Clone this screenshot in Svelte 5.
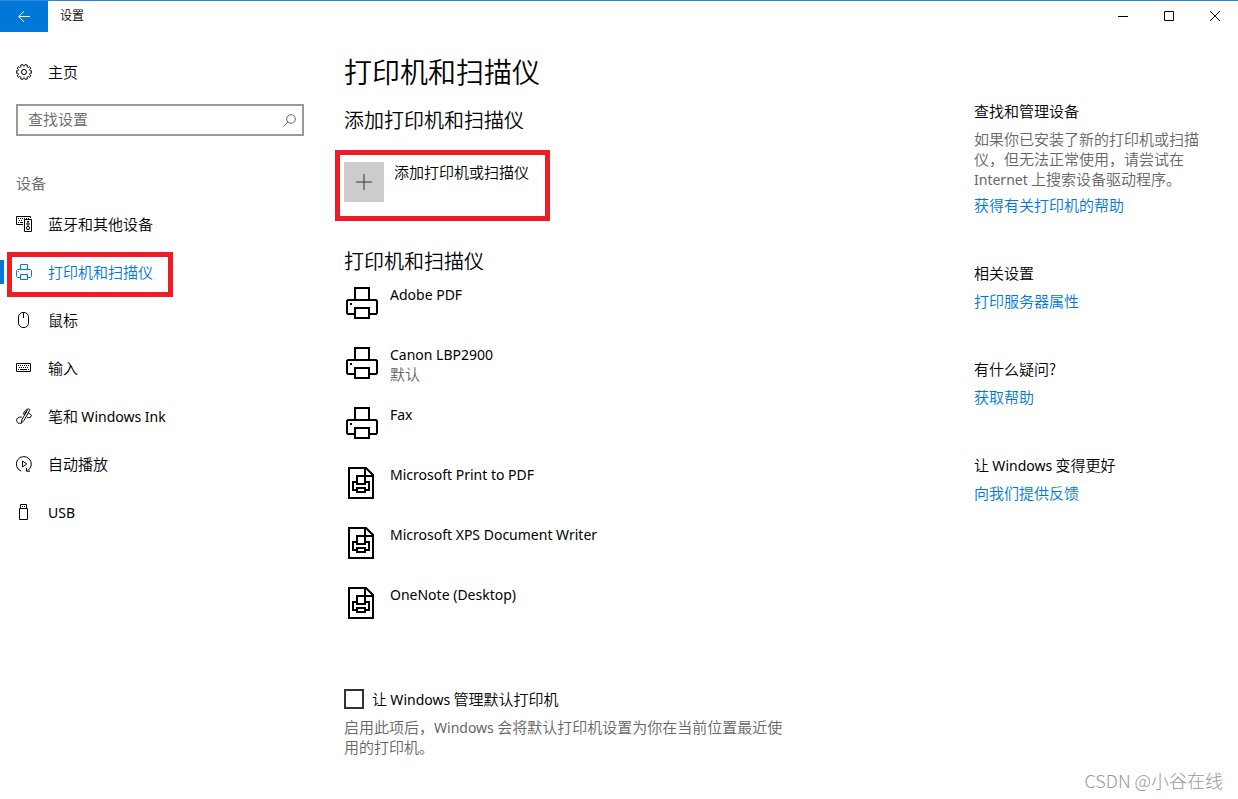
<script>
  const nav = [
    { icon: 'devices', label: '蓝牙和其他设备' },
    { icon: 'printer', label: '打印机和扫描仪', active: true },
    { icon: 'mouse', label: '鼠标' },
    { icon: 'keyboard', label: '输入' },
    { icon: 'pen', label: '笔和', latin: 'Windows Ink' },
    { icon: 'autoplay', label: '自动播放' },
    { icon: 'usb', latin: 'USB' }
  ];

  const printers = [
    { name: 'Adobe PDF' },
    { name: 'Canon LBP2900', status: '默认' },
    { name: 'Fax' },
    { name: 'Microsoft Print to PDF', file: true },
    { name: 'Microsoft XPS Document Writer', file: true },
    { name: 'OneNote (Desktop)', file: true }
  ];

  // Outline of a ten-toothed gear centred in a 16px box.
  const gear = Array.from({ length: 10 }, (_, i) => {
    const point = (r, deg) => {
      const a = ((i * 36 + deg) * Math.PI) / 180;
      return `${(8 + r * Math.cos(a)).toFixed(2)} ${(8 + r * Math.sin(a)).toFixed(2)}`;
    };
    return `${i ? 'L' : 'M'}${point(6.2, -11)}L${point(7.7, -8)}L${point(7.7, 8)}L${point(6.2, 11)}`;
  }).join('') + 'Z';

  let query = $state('');
  let managed = $state(false);
</script>

<div class="window">
  <header class="titlebar">
    <button class="back" aria-label="返回">
      <svg width="12" height="12" viewBox="0 0 12 12"><path d="M12 5.5H.8M6 .3L.7 5.5L6 10.8" /></svg>
    </button>
    <span class="caption">设置</span>
    <div class="controls">
      <button aria-label="最小化"><svg width="10" height="10" viewBox="0 0 10 10"><path d="M0 5.5H10" /></svg></button>
      <button aria-label="最大化"><svg width="10" height="10" viewBox="0 0 10 10"><path d="M.5 .5H9.5V9.5H.5Z" /></svg></button>
      <button aria-label="关闭"><svg width="10" height="10" viewBox="0 0 10 10"><path d="M0 0L10 10M10 0L0 10" /></svg></button>
    </div>
  </header>

  <div class="body">
    <aside class="sidebar">
      <a class="item home" href="#home">
        <svg width="16" height="16" viewBox="0 0 16 16"><path d={gear} /><circle cx="8" cy="8" r="2.5" /></svg>
        <span>主页</span>
      </a>
      <div class="search">
        <input type="text" placeholder="查找设置" aria-label="查找设置" bind:value={query} />
        <svg width="13" height="13" viewBox="0 0 13 13"><circle cx="8" cy="5" r="4.3" /><path d="M5 8L.5 12.5" /></svg>
      </div>
      <h2 class="group">设备</h2>
      <nav>
        {#each nav as entry}
          <a class="item" class:active={entry.active} href="#{entry.icon}">
            <svg width="16" height="16" viewBox="0 0 16 16">
              {#if entry.icon === 'devices'}
                <path d="M7 8.5H.5V.5H14.5V2M2 2.5H3M4 2.5H5M6 2.5H7M8 2.5H9M10 2.5H11M12 2.5H13M3 4.5H4M5 4.5H6M2 6.5H3M4 6.5H7" />
                <path d="M8.5 3.5H15.5V15.5H8.5Z" /><path d="M11 5.5H13" />
                <circle cx="12" cy="8" r="1.2" /><circle cx="12" cy="12" r="1.6" />
              {:else if entry.icon === 'printer'}
                <path d="M4.5 5V.5H11.5V5M4.5 13.5H1.5L.5 12.5V6.5L1.5 5.5H14.5L15.5 6.5V12.5L14.5 13.5H11.5M4.5 10.5H11.5V15.5H4.5ZM2 7.5H3" />
              {:else if entry.icon === 'mouse'}
                <rect x="2.5" y=".5" width="10" height="15" rx="4.5" /><path d="M7.5 1V6" />
              {:else if entry.icon === 'keyboard'}
                <path d="M.5 3.5H14.5V11.5H.5ZM2 5.5H3M4 5.5H5M6 5.5H7M8 5.5H9M10 5.5H11M12 5.5H13M3 7.5H4M5 7.5H6M7 7.5H8M9 7.5H10M11 7.5H12M2 9.5H3M4 9.5H11M12 9.5H13" />
              {:else if entry.icon === 'pen'}
                <path d="M5.2 15.3L6.1 11.4L11.8 1.2C12.4 .2 14.3 1.2 13.7 2.3L8 12.4ZM8.6 6.9L10.7 3.2L8.7 6.2" />
                <path d="M5.7 9C2.5 8.8 .6 10.3 .6 12.3C.6 15.3 3.4 15.7 5.2 15.2M12.4 5.5C14.4 5.8 15.5 6.8 15.4 7.8C15.3 9.2 13.2 9.9 11 9.6M11.8 1.2C9.6 1.4 8.4 3.6 7.2 6.4" />
              {:else if entry.icon === 'autoplay'}
                <path d="M5.2 15.1A7.5 7.5 0 1 1 11.5 14.6M10.5 11.8V15.2H14M6.5 5L10.8 8L6.5 11Z" />
              {:else}
                <path d="M4.5 4V.5H10.5V4M3.5 4.5H11.5V15.5H3.5ZM6 2.5H7M8 2.5H9" />
              {/if}
            </svg>
            <span>{entry.label ?? ''}{entry.label && entry.latin ? ' ' : ''}{#if entry.latin}<span class="latin">{entry.latin}</span>{/if}</span>
            {#if entry.active}<span class="marker"></span><span class="highlight"></span>{/if}
          </a>
        {/each}
      </nav>
    </aside>

    <main>
      <h1>打印机和扫描仪</h1>
      <h2>添加打印机和扫描仪</h2>
      <button class="add">
        <span class="tile">
          <svg width="16" height="16" viewBox="0 0 16 16"><path d="M0 8H16M8 0V16" /></svg>
        </span>
        <span>添加打印机或扫描仪</span>
        <span class="highlight"></span>
      </button>

      <h2 class="installed">打印机和扫描仪</h2>
      <ul>
        {#each printers as printer}
          <li>
            <svg class="device" width="32" height="32" viewBox="0 0 32 32">
              {#if printer.file}
                <path d="M3 1H20L27 8V31H3ZM19 1V9H27" />
                <path d="M11 17V9H19V17ZM11 23H7V15H11M19 15H23V23H19M11 21H19V25H11Z" />
              {:else}
                <path d="M9 12V1H23V12M9 27H2L1 26V14L2 13H30L31 14V26L30 27H23M9 21H23V31H9ZM4 17H6" />
              {/if}
            </svg>
            <div>
              <div><span class="latin">{printer.name}</span></div>
              {#if printer.status}<div class="muted">{printer.status}</div>{/if}
            </div>
          </li>
        {/each}
      </ul>

      <label class="check">
        <input type="checkbox" bind:checked={managed} />
        <span>让 <span class="latin">Windows</span> 管理默认打印机</span>
      </label>
      <p class="muted note">启用此项后，<span class="latin">Windows</span> 会将默认打印机设置为你在当前位置最近使用的打印机。</p>
    </main>

    <aside class="related">
      <section>
        <h3>查找和管理设备</h3>
        <p class="muted">如果你已安装了新的打印机或扫描仪，但无法正常使用，请尝试在 <span class="latin">Internet</span> 上搜索设备驱动程序。</p>
        <a class="after-text" href="#printer-help">获得有关打印机的帮助</a>
      </section>
      <section>
        <h3>相关设置</h3>
        <a href="#server">打印服务器属性</a>
      </section>
      <section>
        <h3>有什么疑问?</h3>
        <a href="#help">获取帮助</a>
      </section>
      <section>
        <h3>让 <span class="latin">Windows</span> 变得更好</h3>
        <a href="#feedback">向我们提供反馈</a>
      </section>
    </aside>
  </div>

  <div class="watermark">CSDN @小谷在线</div>
</div>

<style>
  :global(body) {
    background: #fff;
  }
  .window {
    position: relative;
    box-sizing: border-box;
    min-height: 100vh;
    border-top: 1px solid #2b88d8;
    color: #000;
    font: 15px/20px 'Noto Sans CJK SC', sans-serif;
    font-weight: 350;
  }
  h1, h2, h3, p, ul {
    margin: 0;
    padding: 0;
    font-weight: inherit;
  }
  button {
    padding: 0;
    border: 0;
    background: none;
    color: inherit;
    font: inherit;
  }
  a {
    color: #0078d7;
    text-decoration: none;
  }
  svg {
    flex: none;
    fill: none;
    stroke: currentColor;
  }
  .latin {
    font-family: 'Noto Sans', 'Noto Sans CJK SC', sans-serif;
    font-size: 14px;
    font-weight: 400;
    line-height: 1;
  }
  .muted {
    color: #666;
  }
  .highlight {
    position: absolute;
    border: 5px solid #ee1c25;
    pointer-events: none;
  }

  .titlebar {
    display: flex;
    align-items: stretch;
    height: 31px;
  }
  .back {
    display: grid;
    place-items: center;
    width: 48px;
    background: #0078d7;
    color: #fff;
  }
  .caption {
    padding-left: 12px;
    font-size: 12px;
    line-height: 28px;
  }
  .controls {
    display: flex;
    margin-left: auto;
  }
  .controls button {
    display: grid;
    place-items: center;
    width: 46px;
    height: 30px;
  }

  .body {
    display: flex;
  }
  .sidebar {
    width: 320px;
    flex: none;
    padding-top: 20px;
  }
  .item {
    position: relative;
    display: flex;
    align-items: center;
    gap: 16px;
    height: 48px;
    padding-left: 16px;
    color: #000;
  }
  .item.home {
    height: 40px;
  }
  .item.active {
    color: #0078d7;
  }
  .item .highlight {
    inset: 4px 147px -1px 7px;
  }
  .marker {
    position: absolute;
    left: 0;
    top: 12px;
    width: 4px;
    height: 24px;
    background: #0078d7;
  }
  .search {
    display: flex;
    align-items: center;
    box-sizing: border-box;
    height: 32px;
    margin: 12px 16px 0;
    padding: 0 6px 0 10px;
    border: 2px solid #999;
    color: #666;
  }
  .search input {
    flex: 1;
    min-width: 0;
    height: 28px;
    padding: 0 0 4px;
    box-sizing: border-box;
    border: 0;
    outline: 0;
    background: none;
    color: #000;
    font: inherit;
  }
  .search input::placeholder {
    color: #666;
    opacity: 1;
  }
  .group {
    padding: 37px 16px 7px;
    color: #666;
    font-size: 15px;
  }

  main {
    flex: 1;
    min-width: 0;
    padding: 19px 24px;
  }
  h1 {
    font-size: 28px;
    line-height: 40px;
  }
  main h2 {
    margin-top: 15px;
    font-size: 20px;
    line-height: 28px;
  }
  .add {
    position: relative;
    display: flex;
    align-items: flex-start;
    gap: 10px;
    margin-top: 28px;
  }
  .add .highlight {
    inset: -12px -21px -19px -9px;
  }
  .tile {
    display: grid;
    place-items: center;
    width: 40px;
    height: 40px;
    background: #ccc;
    color: #333;
  }
  main .installed {
    margin-top: 45px;
  }
  ul {
    margin-top: 9px;
    list-style: none;
  }
  li {
    display: flex;
    gap: 12px;
    height: 60px;
    padding-left: 2px;
  }
  .device {
    margin-top: 3px;
    stroke-width: 2;
  }
  .check {
    display: flex;
    align-items: center;
    gap: 8px;
    margin-top: 45px;
  }
  .check input {
    appearance: none;
    width: 20px;
    height: 20px;
    margin: 0;
    border: 2px solid #333;
  }
  .check input:checked {
    background: #0078d7;
  }
  .note {
    max-width: 448px;
    margin-top: 8px;
  }

  .related {
    box-sizing: border-box;
    width: 264px;
    flex: none;
    padding: 69px 32px 0 0;
  }
  section {
    margin-bottom: 48px;
  }
  h3 {
    margin-bottom: 8px;
    font-size: 15px;
  }
  .related a {
    display: block;
  }
  .related .after-text {
    margin-top: 6px;
  }

  .watermark {
    position: absolute;
    right: 15px;
    bottom: 7px;
    color: #999;
    font-size: 18px;
    line-height: 24px;
    font-weight: 300;
  }
</style>
